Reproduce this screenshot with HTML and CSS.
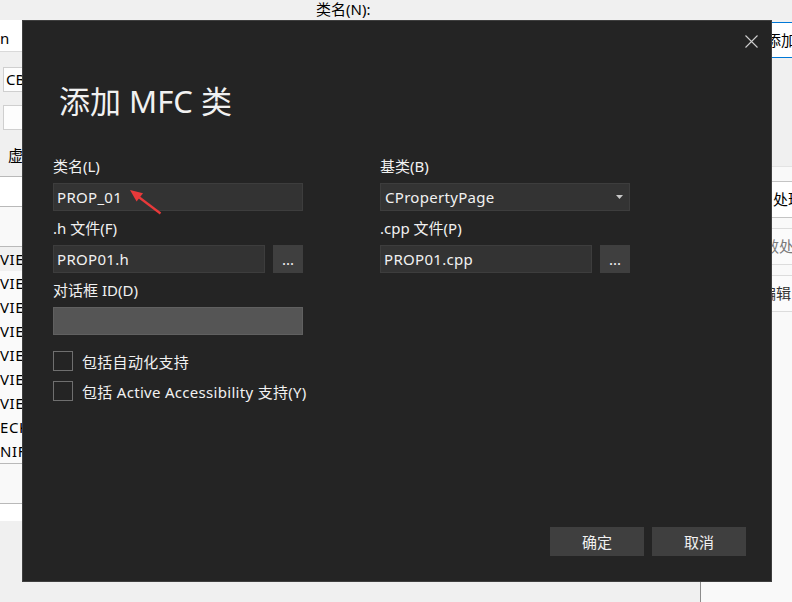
FILE: index.html
```html
<!DOCTYPE html>
<html lang="zh-CN">
<head>
<meta charset="utf-8">
<title>添加 MFC 类</title>
<link rel="stylesheet" href="styles.css">
</head>
<body>
<div class="app">
  <div class="topbar">类名(N):</div>
  <div class="workspace">
    <div class="leftpane">
      <div class="namefield">n</div>
      <div class="bgbtn">CB</div>
      <div class="bgbtn"></div>
      <div class="tabrow">虚</div>
      <div class="whiterow"></div>
      <div class="greyrow"></div>
      <ul class="list">
        <li class="list-item list-item--active">VIEW</li>
        <li class="list-item">VIEW</li>
        <li class="list-item">VIEW</li>
        <li class="list-item">VIEW</li>
        <li class="list-item">VIEW</li>
        <li class="list-item">VIEW</li>
        <li class="list-item">VIEW</li>
        <li class="list-item">ECK</li>
        <li class="list-item">NIF</li>
      </ul>
      <div class="greyrow"></div>
      <div class="whiterow whiterow--short"></div>
    </div>
    <div class="rightpane">
      <div class="addfield">添加</div>
      <div class="handlers">
        <div class="handler handler--main">处理程序</div>
        <div class="handler handler--muted">效处理程序</div>
        <div class="handler handler--edit">编辑</div>
      </div>
    </div>
  </div>
</div>

<section class="dialog">
  <button class="close" aria-label="关闭">
    <svg width="13" height="13" viewBox="0 0 13 13"><path d="M0.5 0.5 L12.5 12.5 M12.5 0.5 L0.5 12.5" stroke="#cfcfcf" stroke-width="1.1" fill="none"/></svg>
  </button>
  <h1 class="dialog-title">添加 MFC 类</h1>
  <div class="form">
    <div class="col">
      <div class="field-label">类名(L)</div>
      <div class="textbox">PROP_01</div>
      <div class="field-label">.h 文件(F)</div>
      <div class="file-row">
        <div class="textbox textbox--grow">PROP01.h</div>
        <button class="browse">...</button>
      </div>
      <div class="field-label">对话框 ID(D)</div>
      <div class="textbox textbox--disabled"></div>
    </div>
    <div class="col">
      <div class="field-label">基类(B)</div>
      <div class="textbox select">
        <span>CPropertyPage</span>
        <svg class="select-arrow" width="7" height="4" viewBox="0 0 7 4"><polygon points="0,0 7,0 3.5,4" fill="#c8c8c8"/></svg>
      </div>
      <div class="field-label">.cpp 文件(P)</div>
      <div class="file-row">
        <div class="textbox textbox--grow">PROP01.cpp</div>
        <button class="browse">...</button>
      </div>
    </div>
  </div>
  <div class="checks">
    <label class="check"><span class="check-box"></span><span>包括自动化支持</span></label>
    <label class="check"><span class="check-box"></span><span>包括 Active Accessibility 支持(Y)</span></label>
  </div>
  <div class="actions">
    <button class="btn">确定</button>
    <button class="btn">取消</button>
  </div>
  <svg class="annotation-arrow" width="40" height="32" viewBox="0 0 40 32">
    <line x1="11" y1="9.5" x2="33.5" y2="26.5" stroke="#e8393a" stroke-width="2.2"/>
    <polygon points="3,3 16,6.2 9.6,14.6" fill="#e8393a"/>
  </svg>
</section>
</body>
</html>
```

FILE: styles.css
```css
html, body {
  margin: 0;
  padding: 0;
}

body {
  width: 792px;
  height: 602px;
  overflow: hidden;
  position: relative;
  background: #f0f0f0;
  font-family: "Noto Sans", "Noto Sans CJK SC", sans-serif;
  font-size: 15px;
  color: #000;
}

.app {
  display: flex;
  flex-direction: column;
  height: 602px;
}

.topbar {
  height: 20px;
  padding-left: 316px;
  line-height: 18px;
  white-space: nowrap;
}

.workspace {
  display: flex;
  flex: 1;
  min-height: 0;
}

.leftpane {
  width: 700px;
  display: flex;
  flex-direction: column;
  background: #f0f0f0;
  white-space: nowrap;
}

.namefield {
  height: 26px;
  padding-top: 5px;
  line-height: 26px;
  background: #fff;
  border-bottom: 1px solid #d9d9d9;
}

.bgbtn {
  height: 23px;
  margin: 15px 0 0 3px;
  padding-left: 2px;
  border: 1px solid #cfcfcf;
  background: #fdfdfd;
  line-height: 23px;
}

.bgbtn + .bgbtn {
  margin-top: 13px;
}

.tabrow {
  margin-top: 10px;
  height: 36px;
  padding-left: 8px;
  line-height: 30px;
  border-bottom: 1px solid #b9b9b9;
}

.whiterow {
  height: 29px;
  background: #fff;
  border-bottom: 1px solid #b9b9b9;
}

.whiterow--short {
  height: 17px;
  border-bottom: 0;
}

.greyrow {
  height: 39px;
  background: #f9f9f9;
  border-bottom: 1px solid #b9b9b9;
}

.list {
  list-style: none;
  margin: 0;
  padding: 0;
  background: #fafafa;
  border-bottom: 1px solid #b9b9b9;
}

.list-item {
  height: 24px;
  line-height: 24px;
  letter-spacing: 0.6px;
}

.list-item--active {
  background: #f0f0f0;
}

.rightpane {
  flex: 1;
  display: flex;
  flex-direction: column;
  border-left: 1px solid #8c8c8c;
  background: #f0f0f0;
  white-space: nowrap;
  overflow: hidden;
}

.addfield {
  margin-top: 2px;
  height: 34px;
  padding-left: 65px;
  line-height: 34px;
  background: #fff;
  border-top: 1px solid #0078d7;
  border-bottom: 1px solid #0078d7;
}

.handlers {
  margin-top: 108px;
  flex: 1;
  background: #f9f9f9;
  border-top: 1px solid #e3e3e3;
  padding-top: 14px;
  display: flex;
  flex-direction: column;
  gap: 10px;
}

.handler {
  height: 35px;
  line-height: 35px;
  border-top: 1px solid #dcdcdc;
  border-bottom: 1px solid #dcdcdc;
  background: #fbfbfb;
}

.handler--main {
  padding-left: 72px;
  border-color: #c4c4c4;
  background: #fff;
}

.handler--muted {
  padding-left: 63px;
  color: #7a7a7a;
}

.handler--edit {
  padding-left: 60px;
  color: #333;
}

/* dialog */
.dialog {
  position: absolute;
  left: 22px;
  top: 20px;
  width: 750px;
  height: 562px;
  box-sizing: border-box;
  border: 1px solid #3f3f3f;
  background: #242424;
  padding: 60px 25px 25px 30px;
  display: flex;
  flex-direction: column;
  color: #f1f1f1;
}

.close {
  position: absolute;
  left: 722px;
  top: 14px;
  width: 13px;
  height: 13px;
  padding: 0;
  border: 0;
  background: transparent;
  display: block;
}

.close svg {
  display: block;
}

.dialog-title {
  margin: 0 0 28px 6px;
  height: 40px;
  font-size: 31px;
  font-weight: normal;
  line-height: 40px;
  white-space: nowrap;
}

.form {
  display: grid;
  grid-template-columns: 250px 250px;
  column-gap: 77px;
  align-items: start;
}

.col {
  display: flex;
  flex-direction: column;
}

.field-label {
  height: 34px;
  line-height: 34px;
  white-space: nowrap;
}

.textbox {
  height: 28px;
  box-sizing: border-box;
  border: 1px solid #3d3d3d;
  background: #333333;
  padding-left: 3px;
  line-height: 26px;
  color: #f1f1f1;
  white-space: nowrap;
  letter-spacing: 0.3px;
}

.textbox--grow {
  flex: 1;
}

.textbox--disabled {
  background: #555555;
  border-color: #606060;
}

.select {
  display: flex;
  align-items: center;
  justify-content: space-between;
  padding-left: 4px;
  padding-right: 6px;
}

.select-arrow {
  display: block;
}

.file-row {
  display: flex;
  gap: 8px;
}

.browse {
  width: 30px;
  height: 28px;
  padding: 0;
  border: 0;
  background: #3f3f3f;
  color: #f1f1f1;
  font-family: "Noto Sans", "Noto Sans CJK SC", sans-serif;
  font-size: 15px;
  line-height: 28px;
}

.checks {
  margin-top: 16px;
  display: flex;
  flex-direction: column;
  gap: 10px;
}

.check {
  display: flex;
  align-items: center;
  gap: 9px;
  height: 20px;
  white-space: nowrap;
  letter-spacing: 0.3px;
}

.check-box {
  width: 20px;
  height: 20px;
  box-sizing: border-box;
  border: 1px solid #6f6f6f;
  flex: none;
}

.actions {
  margin-top: auto;
  display: flex;
  justify-content: flex-end;
  gap: 8px;
}

.btn {
  width: 94px;
  height: 29px;
  padding: 0;
  border: 0;
  background: #3f3f3f;
  color: #f1f1f1;
  font-family: "Noto Sans", "Noto Sans CJK SC", sans-serif;
  font-size: 15px;
}

.annotation-arrow {
  position: absolute;
  left: 104px;
  top: 166px;
}
```
